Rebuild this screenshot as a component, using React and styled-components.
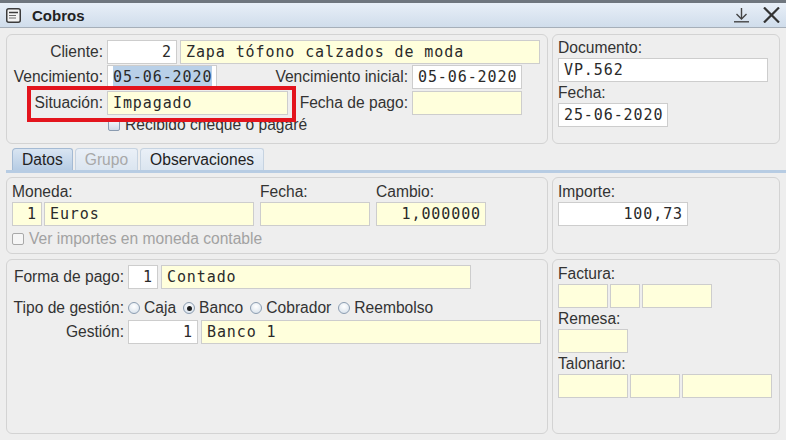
import React from "react";
import styled, { createGlobalStyle, css } from "styled-components";

const GlobalStyle = createGlobalStyle`
  html, body {
    margin: 0;
    padding: 0;
    background: #eeeeee;
  }
  body {
    font-family: "Liberation Sans", Arial, sans-serif;
    font-size: 15.6px;
    color: #333333;
  }
`;

const Window = styled.div`
  width: 786px;
  height: 440px;
  display: flex;
  flex-direction: column;
  background: #eeeeee;
  overflow: hidden;
`;

const TitleBar = styled.div`
  height: 24px;
  border-top: 3px solid #6f767e;
  border-bottom: 1px solid #a6afb9;
  background: linear-gradient(#e8eff7, #d0ddeb);
  display: flex;
  align-items: center;
  gap: 11px;
  padding: 0 6px;
`;

const Title = styled.span`
  font-weight: bold;
  font-size: 15px;
  color: #222;
`;

const Controls = styled.div`
  margin-left: auto;
  display: flex;
  align-items: center;
  gap: 13px;
`;

const Body = styled.div`
  flex: 1;
  padding: 6px;
  display: flex;
  flex-direction: column;
`;

const Columns = styled.div`
  display: grid;
  grid-template-columns: 542px 228px;
  column-gap: 4px;
  height: ${(p) => p.$h}px;
  margin-top: ${(p) => p.$mt || 0}px;
`;

const Panel = styled.div`
  position: relative;
  border: 1px solid #d3d3d3;
  border-radius: 6px;
  padding: ${(p) => p.$pad || "3px 5px 0"};
  display: flex;
  flex-direction: column;
`;

const Row = styled.div`
  display: flex;
  align-items: center;
  gap: ${(p) => (p.$gap === undefined ? 4 : p.$gap)}px;
  width: ${(p) => (p.$w ? `${p.$w}px` : "auto")};
  margin-top: ${(p) => p.$mt || 0}px;
`;

const Label = styled.span`
  display: block;
  white-space: nowrap;
  line-height: ${(p) => p.$lh || 24}px;
  color: ${(p) => (p.$disabled ? "#a2a2a2" : "#333")};
  ${(p) =>
    p.$w &&
    css`
      width: ${p.$w}px;
      flex: none;
      text-align: right;
    `}
  ${(p) =>
    p.$grow &&
    css`
      flex: 1;
      text-align: right;
    `}
`;

const Field = styled.div`
  box-sizing: border-box;
  flex: none;
  width: ${(p) => p.$w}px;
  height: 24px;
  border: 1px solid #cdcdcd;
  background: ${(p) => (p.$tone === "yellow" ? "#ffffdc" : "#ffffff")};
  font-family: "DejaVu Sans Mono", "Liberation Mono", monospace;
  font-size: 15px;
  letter-spacing: 0.9px;
  line-height: 22px;
  color: #2a2a2a;
  padding: 0 4px 0 5px;
  text-align: ${(p) => (p.$right ? "right" : "left")};
  white-space: nowrap;
  overflow: hidden;
`;

const Selected = styled.span`
  background: #b9d0e8;
  padding: 2px 0;
`;

const Highlight = styled.div`
  position: absolute;
  left: 20px;
  top: 51px;
  width: 269px;
  height: 36px;
  box-sizing: border-box;
  border: 4px solid #e3141d;
  pointer-events: none;
  z-index: 2;
`;

const Box = styled.span`
  box-sizing: border-box;
  width: 12px;
  height: 12px;
  flex: none;
  border: 1px solid ${(p) => (p.$disabled ? "#a9a9a9" : "#8a9bb0")};
  border-radius: 2px;
  background: ${(p) =>
    p.$disabled ? "#f6f6f6" : "linear-gradient(#fbfcfd, #cfdae7)"};
`;

const CheckRow = styled.label`
  display: flex;
  align-items: center;
  gap: 5px;
  height: 18px;
  margin-top: ${(p) => p.$mt || 0}px;
  margin-left: ${(p) => p.$ml || 0}px;
  color: ${(p) => (p.$disabled ? "#a2a2a2" : "#333")};
`;

const Tabs = styled.div`
  display: flex;
  gap: 2px;
  margin: 4px -6px 0 0;
  padding-left: 6px;
  height: 22px;
  border-bottom: 3px solid #b7cce3;
`;

const Tab = styled.div`
  box-sizing: border-box;
  height: 22px;
  padding: 0 9px;
  line-height: 21px;
  border: 1px solid ${(p) => (p.$active ? "#a4bad3" : "#c6d3e1")};
  border-bottom: none;
  border-radius: 4px 3px 0 0;
  background: ${(p) =>
    p.$active
      ? "linear-gradient(#d9e5f2, #b6cce4)"
      : "linear-gradient(#eaf0f7, #dbe5f0)"};
  color: ${(p) => (p.$disabled ? "#a8a8a8" : "#222")};
`;

const Group = styled.div`
  display: flex;
  flex-direction: column;
`;

const Radios = styled.div`
  display: flex;
  align-items: center;
  gap: 7px;
`;

const RadioOption = styled.span`
  display: flex;
  align-items: center;
  gap: 4px;
`;

const RadioDot = styled.span`
  box-sizing: border-box;
  width: 12px;
  height: 12px;
  border-radius: 50%;
  border: 1px solid #8c9db1;
  background: radial-gradient(circle at 50% 35%, #ffffff, #d3dee9);
  display: flex;
  align-items: center;
  justify-content: center;
  &::after {
    content: "";
    width: 5px;
    height: 5px;
    border-radius: 50%;
    background: ${(p) => (p.$on ? "#1e1e1e" : "transparent")};
  }
`;

const WindowIcon = () => (
  <svg width="15" height="15" viewBox="0 0 15 15">
    <rect x="0.75" y="0.75" width="13.5" height="13.5" rx="2" fill="#f3f3f3" stroke="#3c3c3c" strokeWidth="1.5" />
    <line x1="3" y1="4.5" x2="12" y2="4.5" stroke="#3c3c3c" strokeWidth="1.5" />
    <line x1="3" y1="7.5" x2="10" y2="7.5" stroke="#6a6a6a" strokeWidth="1" />
    <line x1="3" y1="10" x2="10" y2="10" stroke="#6a6a6a" strokeWidth="1" />
  </svg>
);

const DockIcon = () => (
  <svg width="17" height="16" viewBox="0 0 17 16">
    <line x1="8.5" y1="1" x2="8.5" y2="12" stroke="#444" strokeWidth="1.4" />
    <polyline points="3.5,7 8.5,12 13.5,7" fill="none" stroke="#444" strokeWidth="1.4" />
    <line x1="1" y1="14.8" x2="16" y2="14.8" stroke="#444" strokeWidth="1.4" />
  </svg>
);

const CloseIcon = () => (
  <svg width="17" height="16" viewBox="0 0 17 16">
    <line x1="1" y1="0.5" x2="16" y2="15.5" stroke="#333" strokeWidth="2.2" />
    <line x1="16" y1="0.5" x2="1" y2="15.5" stroke="#333" strokeWidth="2.2" />
  </svg>
);

function Radio({ on, children }) {
  return (
    <RadioOption>
      <RadioDot $on={on} />
      {children}
    </RadioOption>
  );
}

export default function App() {
  return (
    <Window>
      <GlobalStyle />
      <TitleBar>
        <WindowIcon />
        <Title>Cobros</Title>
        <Controls>
          <DockIcon />
          <CloseIcon />
        </Controls>
      </TitleBar>
      <Body>
        <Columns $h={110}>
          <Panel $pad="5px 0 0 0">
            <Row $gap={4}>
              <Label $w={96}>Cliente:</Label>
              <Row $gap={3}>
                <Field $w={70} $right>2</Field>
                <Field $w={360} $tone="yellow">Zapa tófono calzados de moda</Field>
              </Row>
            </Row>
            <Row $w={515} $mt={1}>
              <Label $w={96}>Vencimiento:</Label>
              <Field $w={110}>
                <Selected>05-06-2020</Selected>
              </Field>
              <Label $grow>Vencimiento inicial:</Label>
              <Field $w={110}>05-06-2020</Field>
            </Row>
            <Row $w={515} $mt={2}>
              <Label $w={96}>Situación:</Label>
              <Field $w={181} $tone="yellow">Impagado</Field>
              <Label $grow>Fecha de pago:</Label>
              <Field $w={110} $tone="yellow" />
            </Row>
            <CheckRow $mt={1} $ml={101}>
              <Box />
              Recibido cheque o pagaré
            </CheckRow>
            <Highlight />
          </Panel>
          <Panel $pad="2px 5px 0">
            <Label $lh={21}>Documento:</Label>
            <Field $w={210}>VP.562</Field>
            <Label $lh={21}>Fecha:</Label>
            <Field $w={110}>25-06-2020</Field>
          </Panel>
        </Columns>

        <Tabs>
          <Tab $active>Datos</Tab>
          <Tab $disabled>Grupo</Tab>
          <Tab>Observaciones</Tab>
        </Tabs>

        <Columns $h={77} $mt={4}>
          <Panel>
            <Row $gap={6}>
              <Group>
                <Label $lh={21}>Moneda:</Label>
                <Row $gap={2}>
                  <Field $w={30} $tone="yellow" $right>1</Field>
                  <Field $w={210} $tone="yellow">Euros</Field>
                </Row>
              </Group>
              <Group>
                <Label $lh={21}>Fecha:</Label>
                <Field $w={110} $tone="yellow" />
              </Group>
              <Group>
                <Label $lh={21}>Cambio:</Label>
                <Field $w={110} $tone="yellow" $right>1,000000</Field>
              </Group>
            </Row>
            <CheckRow $mt={4} $disabled>
              <Box $disabled />
              Ver importes en moneda contable
            </CheckRow>
          </Panel>
          <Panel>
            <Label $lh={21}>Importe:</Label>
            <Field $w={130} $right>100,73</Field>
          </Panel>
        </Columns>

        <Columns $h={175} $mt={5}>
          <Panel $pad="5px 5px 0 0">
            <Row>
              <Label $w={117}>Forma de pago:</Label>
              <Row $gap={3}>
                <Field $w={30} $right>1</Field>
                <Field $w={310} $tone="yellow">Contado</Field>
              </Row>
            </Row>
            <Row $mt={7}>
              <Label $w={117}>Tipo de gestión:</Label>
              <Radios>
                <Radio>Caja</Radio>
                <Radio on>Banco</Radio>
                <Radio>Cobrador</Radio>
                <Radio>Reembolso</Radio>
              </Radios>
            </Row>
            <Row>
              <Label $w={117}>Gestión:</Label>
              <Row $gap={3}>
                <Field $w={70} $right>1</Field>
                <Field $w={340} $tone="yellow">Banco 1</Field>
              </Row>
            </Row>
          </Panel>
          <Panel>
            <Label $lh={21}>Factura:</Label>
            <Row $gap={2}>
              <Field $w={50} $tone="yellow" />
              <Field $w={30} $tone="yellow" />
              <Field $w={70} $tone="yellow" />
            </Row>
            <Label $lh={21}>Remesa:</Label>
            <Field $w={70} $tone="yellow" />
            <Label $lh={21}>Talonario:</Label>
            <Row $gap={2}>
              <Field $w={70} $tone="yellow" />
              <Field $w={50} $tone="yellow" />
              <Field $w={90} $tone="yellow" />
            </Row>
          </Panel>
        </Columns>
      </Body>
    </Window>
  );
}
